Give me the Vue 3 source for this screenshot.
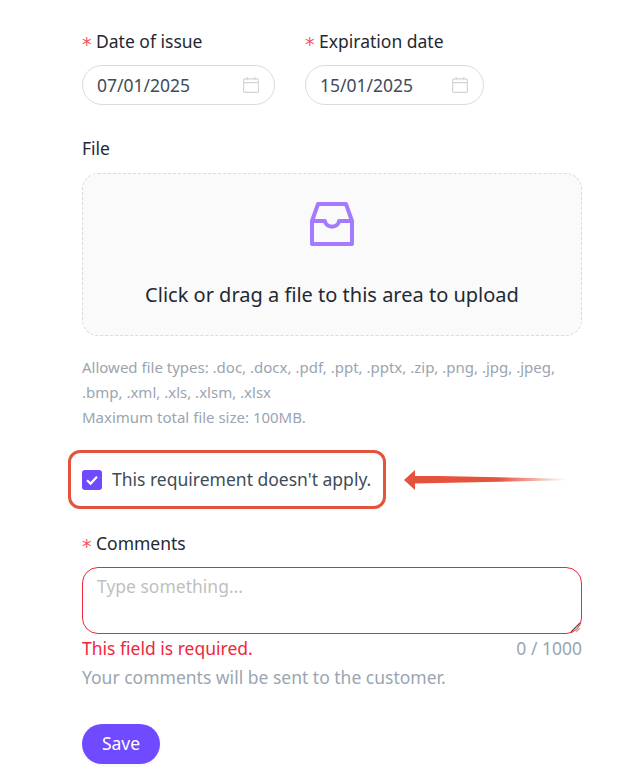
<script setup>
const dates = [
  { label: 'Date of issue', value: '07/01/2025', width: '193px' },
  { label: 'Expiration date', value: '15/01/2025', width: '179px' }
];
</script>

<template>
  <div class="page">
    <div class="dates">
      <div v-for="d in dates" :key="d.label" class="date-field">
        <label class="label"><span class="star">*</span>{{ d.label }}</label>
        <div class="date-input" :style="{ width: d.width }">
          <span>{{ d.value }}</span>
          <svg width="16" height="16" viewBox="0 0 16 16" fill="none" stroke="#d3d6d8" stroke-width="1.2">
            <rect x="0.6" y="1.8" width="14.8" height="13.6" rx="1" />
            <path d="M0.6 5.6h14.8M4.2 0v3.2M11.8 0v3.2" />
          </svg>
        </div>
      </div>
    </div>

    <label class="label file-label">File</label>
    <div class="upload">
      <svg width="44" height="44" viewBox="0 0 44 44" fill="none" stroke="#a47bff" stroke-width="4" stroke-linejoin="round">
        <path d="M2 19 L8 2 H36 L42 19 V42 H2 Z" />
        <path d="M2 19 H15 C15.5 26.5 28.5 26.5 29 19 H42" />
      </svg>
      <div class="upload-text">Click or drag a file to this area to upload</div>
    </div>
    <p class="hint">
      Allowed file types: .doc, .docx, .pdf, .ppt, .pptx, .zip, .png, .jpg, .jpeg,<br />
      .bmp, .xml, .xls, .xlsm, .xlsx<br />
      Maximum total file size: 100MB.
    </p>

    <div class="apply-row">
      <div class="apply-box">
        <span class="checkbox">
          <svg width="20" height="20" viewBox="0 0 20 20" fill="none" stroke="#fff" stroke-width="2.2">
            <path d="M5 10.2 L8.6 13.6 L15 6.8" />
          </svg>
        </span>
        <span class="apply-text">This requirement doesn't apply.</span>
      </div>
      <div class="arrow">
        <div class="arrow-head"></div>
        <div class="arrow-tail"></div>
      </div>
    </div>

    <label class="label comments-label"><span class="star">*</span>Comments</label>
    <div class="textarea">
      <span class="placeholder">Type something...</span>
      <svg class="grip" width="12" height="12" viewBox="0 0 12 12" stroke-width="1.2">
        <path d="M2 11 L11 2" stroke="#555" />
        <path d="M7 11 L11 7" stroke="#c9a0a6" />
      </svg>
    </div>
    <div class="below">
      <span class="error">This field is required.</span>
      <span class="count">0 / 1000</span>
    </div>
    <div class="note">Your comments will be sent to the customer.</div>

    <button class="save">Save</button>
  </div>
</template>

<style scoped>
.page {
  width: 627px;
  height: 775px;
  box-sizing: border-box;
  padding: 30px 45px 0 82px;
  font-family: "Noto Sans", "Open Sans", sans-serif;
  color: #1f2933;
  background: #fff;
  overflow: hidden;
}

.dates {
  display: flex;
  gap: 30px;
}

.label {
  display: flex;
  align-items: flex-start;
  height: 24px;
  font-size: 17.5px;
  line-height: 22px;
  color: #1f2933;
}

.star {
  font-family: "DejaVu Sans", sans-serif;
  font-size: 19px;
  line-height: 24px;
  color: #f5535f;
  width: 14px;
  padding-top: 2px;
}

.date-input {
  box-sizing: border-box;
  height: 40px;
  margin-top: 11px;
  padding: 0 15px 0 14px;
  display: flex;
  align-items: center;
  justify-content: space-between;
  border: 1px solid #d9dcde;
  border-radius: 20px;
  font-size: 17.5px;
  color: #3e4c59;
}

.file-label {
  margin-top: 32px;
}

.upload {
  box-sizing: border-box;
  height: 163px;
  margin-top: 12px;
  padding-top: 28px;
  display: flex;
  flex-direction: column;
  align-items: center;
  border: 1px dashed #d9dcde;
  border-radius: 16px;
  background: #fafafa;
}

.upload-text {
  margin-top: 35px;
  font-size: 20px;
  line-height: 28px;
  color: #1f2933;
}

.hint {
  margin: 19px 0 0;
  font-size: 15px;
  line-height: 25px;
  color: #9aa5b1;
}

.apply-row {
  display: flex;
  align-items: center;
  margin: 20px 0 0 -14px;
}

.apply-box {
  box-sizing: border-box;
  width: 318px;
  height: 59px;
  padding-left: 11px;
  display: flex;
  align-items: center;
  gap: 10px;
  border: 3px solid #e5533d;
  border-radius: 12px;
}

.checkbox {
  width: 20px;
  height: 20px;
  border-radius: 3px;
  background: #6f4aff;
  display: flex;
}

.apply-text {
  padding-bottom: 2px;
  font-size: 17.5px;
  color: #3e4c59;
}

.arrow {
  display: flex;
  align-items: center;
  margin-left: 18px;
}

.arrow-head {
  width: 0;
  height: 0;
  border-top: 10px solid transparent;
  border-bottom: 10px solid transparent;
  border-right: 11px solid #e5533d;
}

.arrow-tail {
  width: 152px;
  height: 8px;
  background: linear-gradient(to right, #e5533d 55%, rgba(229, 83, 61, 0));
  clip-path: polygon(0 0, 100% 40%, 100% 60%, 0 100%);
}

.comments-label {
  margin-top: 23px;
}

.textarea {
  position: relative;
  box-sizing: border-box;
  height: 67px;
  margin-top: 11px;
  padding: 6px 14px;
  border: 1px solid #f0263c;
  border-radius: 16px;
  font-size: 17.5px;
  line-height: 24px;
}

.placeholder {
  color: #bfbfbf;
}

.grip {
  position: absolute;
  right: 0;
  bottom: 0;
}

.below {
  display: flex;
  justify-content: space-between;
  font-size: 17.5px;
  line-height: 28px;
}

.error {
  color: #f0263c;
}

.count,
.note {
  color: #9aa5b1;
}

.note {
  font-size: 17.5px;
  line-height: 30px;
}

.save {
  display: block;
  width: 78px;
  height: 40px;
  margin-top: 32px;
  padding: 0 0 2px;
  border: 0;
  border-radius: 20px;
  background: #6f4aff;
  color: #fff;
  font-family: inherit;
  font-size: 17.5px;
  box-shadow: 0 2px 4px rgba(0, 0, 0, 0.04);
}
</style>
